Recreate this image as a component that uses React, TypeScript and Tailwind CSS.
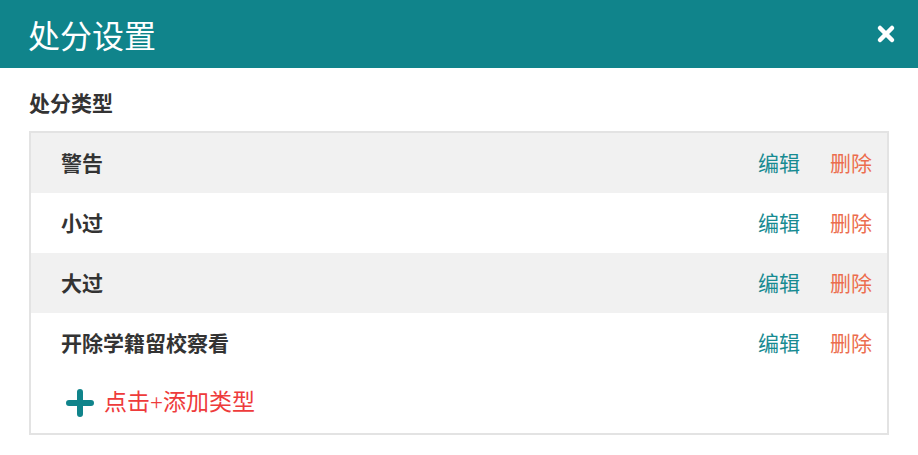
import { X } from "lucide-react"

const rows = ["警告", "小过", "大过", "开除学籍留校察看"]

const App = () => {
    return (
        <div className="w-[918px] h-[455px] bg-white" style={{ fontFamily: '"Noto Sans CJK SC", "Noto Sans", sans-serif' }}>
            <div className="h-[68px] bg-[#10848b] flex items-center justify-between pl-[28px] pr-[20px]">
                <h1 className="text-[32px] text-white leading-none">处分设置</h1>
                <X size={24} strokeWidth={4.5} className="text-white" />
            </div>
            <div className="px-[29px]">
                <h2 className="text-[21px] font-bold text-[#333] pt-[21px] pb-[16px] leading-[26px]">处分类型</h2>
                <div className="border-2 border-[#e3e3e3]">
                    {rows.map((r, i) => (
                        <div key={r} className={`h-[60px] flex items-center justify-between pl-[30px] pr-[15px] ${i % 2 === 0 ? "bg-[#f1f1f1]" : "bg-white"}`}>
                            <span className="text-[21px] font-bold text-[#333]">{r}</span>
                            <div className="flex items-center gap-[30px] text-[21px]">
                                <span className="text-[#178b92]">编辑</span>
                                <span className="text-[#ec6d4e]">删除</span>
                            </div>
                        </div>
                    ))}
                    <div className="h-[60px] flex items-center pl-[35px] gap-[10px]">
                        <svg width="28" height="28" viewBox="0 0 28 28">
                            <path d="M14 3v22M3 14h22" stroke="#10848b" strokeWidth="6" strokeLinecap="round" />
                        </svg>
                        <span className="text-[23px] text-[#ee3b3b]" style={{ fontFamily: '"Liberation Serif", "Noto Sans CJK SC", serif' }}>点击+添加类型</span>
                    </div>
                </div>
            </div>
        </div>
    )
}

export default App
